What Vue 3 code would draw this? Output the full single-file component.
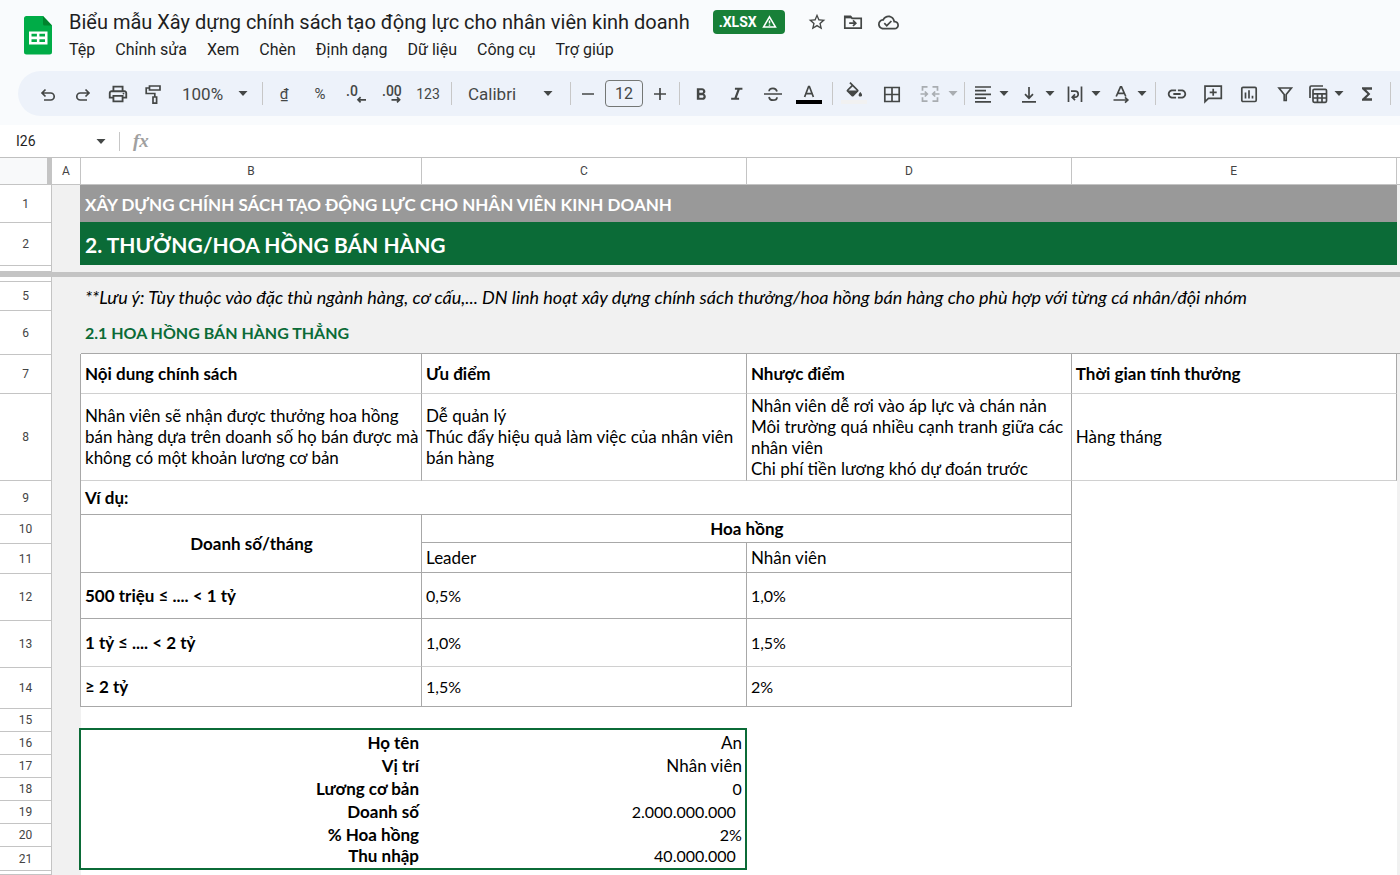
<script setup>
import { ref } from 'vue'

const menus = ['Tệp', 'Chỉnh sửa', 'Xem', 'Chèn', 'Định dạng', 'Dữ liệu', 'Công cụ', 'Trợ giúp']
const zoom = ref('100%')
const family = ref('Calibri')
const fontSize = ref('12')
const cellRef = ref('I26')

const frozenRows = [
  { n: '1', h: 38 },
  { n: '2', h: 43 },
  { n: '', h: 6 },
]
const bodyRows = [
  { n: '', h: 5 },
  { n: '5', h: 29 },
  { n: '6', h: 44 },
  { n: '7', h: 39 },
  { n: '8', h: 87 },
  { n: '9', h: 34 },
  { n: '10', h: 29 },
  { n: '11', h: 30 },
  { n: '12', h: 47 },
  { n: '13', h: 47 },
  { n: '14', h: 41 },
  { n: '15', h: 23 },
  { n: '16', h: 23 },
  { n: '17', h: 23 },
  { n: '18', h: 23 },
  { n: '19', h: 23 },
  { n: '20', h: 23 },
  { n: '21', h: 24 },
  { n: '', h: 4 },
]
const rates = [
  { label: '500 triệu ≤ .... < 1 tỷ', leader: '0,5%', staff: '1,0%', cls: 'r12' },
  { label: '1 tỷ ≤ .... < 2 tỷ', leader: '1,0%', staff: '1,5%', cls: 'r13' },
  { label: '≥ 2 tỷ', leader: '1,5%', staff: '2%', cls: 'r14' },
]
const example = [
  { label: 'Họ tên', value: 'An' },
  { label: 'Vị trí', value: 'Nhân viên' },
  { label: 'Lương cơ bản', value: '0', kind: 'digits' },
  { label: 'Doanh số', value: '2.000.000.000', kind: 'digits money' },
  { label: '% Hoa hồng', value: '2%', kind: 'digits' },
  { label: 'Thu nhập', value: '40.000.000', kind: 'digits money' },
]
const splitTools = [
  { name: 'Căn ngang', d: 'M2 3h16M2 6.7h11M2 10.4h16M2 14.1h11M2 17.8h16' },
  { name: 'Căn dọc', d: 'M10 3v11M6 10.2l4 4 4-4M3 17.8h14' },
  { name: 'Xuống dòng', d: 'M3.5 2.5v15.5M16.5 2.5v15.5M6 7.2h4.2a3 3 0 0 1 0 6H8M10 10.3L7.2 13.2l2.8 2.9' },
  { name: 'Xoay văn bản', d: 'M5.2 12.5L9.5 2.8h1l4.3 9.7M6.6 9.4h6.8M2.5 16h14M14 13.4l2.8 2.6-2.8 2.6' },
]
</script>

<template>
  <div class="app">
    <header class="top">
      <div class="brand">
        <a class="logo" href="#" aria-label="Trang tính">
          <svg width="28" height="39" viewBox="0 0 28 39">
            <path d="M2.5 0H19l9 9.5V36a2.5 2.5 0 0 1-2.500 2.500h-23A2.500 2.500 0 0 1 0 36V2.500A2.500 2.500 0 0 1 2.500 0z" fill="#00ac47" />
            <path d="M19 0l9 9.500h-7.500A1.500 1.500 0 0 1 19 8z" fill="#00832d" />
            <path d="M5 15.500h18.500V28.500H5zM7.500 17.800v2.800h5.400v-2.800zM15.400 17.800v2.800H21v-2.800zM7.500 23.200V26h5.400v-2.800zM15.400 23.200V26H21v-2.800z" fill="#fff" fill-rule="evenodd" />
          </svg>
        </a>
        <div class="heading">
          <div class="title-row">
            <h1>Biểu mẫu Xây dựng chính sách tạo động lực cho nhân viên kinh doanh</h1>
            <span class="badge">.XLSX
              <svg width="15" height="14" viewBox="0 0 15 14" fill="none" stroke="#fff" stroke-width="1.500"><path d="M7.500 1.800L13.500 12h-12z" /><path d="M7.500 5.500v3M7.500 9.500v1.300" /></svg>
            </span>
            <div class="doc-actions">
              <button aria-label="Gắn dấu sao"><svg width="20" height="20" viewBox="0 0 24 24"><path d="M22 9.240l-7.190-.62L12 2 9.190 8.630 2 9.240l5.460 4.730L5.820 21 12 17.270 18.180 21l-1.630-7.030L22 9.240zM12 15.400l-3.760 2.270 1-4.280-3.320-2.880 4.380-.38L12 6.100l1.710 4.040 4.380.38-3.320 2.880 1 4.280L12 15.400z" /></svg></button>
              <button aria-label="Di chuyển"><svg class="line" width="20" height="20" viewBox="0 0 20 20"><path d="M1.800 4.300h5.700l1.600 2h9.100v9.900H1.800z" /><path d="M2 5.500h6.500" /><path d="M6.200 11.200h6.300M10 8.400l2.800 2.800-2.800 2.800" /></svg></button>
              <button aria-label="Trạng thái lưu"><svg width="21" height="21" viewBox="0 0 24 24"><path d="M19.350 10.040C18.670 6.590 15.640 4 12 4 9.110 4 6.600 5.640 5.350 8.040 2.340 8.360 0 10.910 0 14c0 3.310 2.690 6 6 6h13c2.760 0 5-2.240 5-5 0-2.640-2.050-4.780-4.650-4.960zM19 18H6c-2.210 0-4-1.790-4-4 0-2.050 1.530-3.760 3.560-3.970l1.070-.11.500-.95C8.080 7.140 9.940 6 12 6c2.620 0 4.880 1.860 5.390 4.430l.3 1.500 1.530.11c1.560.1 2.780 1.410 2.780 2.960 0 1.650-1.350 3-3 3zm-9-3.820l-2.090-2.090L6.500 13.500 10 17l6.010-6.010-1.410-1.410z" /></svg></button>
            </div>
          </div>
          <nav class="menus">
            <button v-for="m in menus" :key="m">{{ m }}</button>
          </nav>
        </div>
      </div>

      <div class="toolbar" role="toolbar">
        <button class="tool narrow" aria-label="Hoàn tác"><svg class="line" width="20" height="20" viewBox="0 0 20 20"><path d="M7.500 5.500L4 9l3.500 3.500M4 9h8.700a3.500 3.500 0 0 1 0 7H6" /></svg></button>
        <button class="tool narrow" aria-label="Làm lại"><svg class="line" width="20" height="20" viewBox="0 0 20 20"><path d="M12.500 5.500L16 9l-3.500 3.500M16 9H7.300a3.500 3.500 0 0 0 0 7H14" /></svg></button>
        <button class="tool narrow" aria-label="In"><svg width="22" height="22" viewBox="0 0 24 24"><path d="M19 8h-1V3H6v5H5c-1.660 0-3 1.340-3 3v6h4v4h12v-4h4v-6c0-1.660-1.340-3-3-3zM8 5h8v3H8V5zm8 12v2H8v-4h8v2zm2-2v-2H6v2H4v-4c0-.55.45-1 1-1h14c.55 0 1 .45 1 1v4h-2z" /><circle cx="18" cy="11.500" r="1" /></svg></button>
        <button class="tool narrow" aria-label="Sao chép định dạng"><svg class="line" width="20" height="22" viewBox="0 0 20 22"><path d="M6.500 3h10.500v4H6.500zM6.500 5H3.200v5.500h8.600v3.500M10 14h3.600v6.200H10z" /></svg></button>
        <label class="pick zoom"><select v-model="zoom" aria-label="Thu phóng"><option>100%</option></select><svg class="caret" width="10" height="5" viewBox="0 0 10 5"><path d="M.5 0h9L5 5z" /></svg></label>
        <i class="sep"></i>
        <button class="tool txt">₫</button>
        <button class="tool txt">%</button>
        <button class="tool" aria-label="Giảm số thập phân"><svg width="20" height="20" viewBox="0 0 20 20"><text x="0" y="12" class="dec">.0</text><path class="stroke" d="M20 15.800h-8M14.600 13.200L12 15.800l2.600 2.600" /></svg></button>
        <button class="tool" aria-label="Tăng số thập phân"><svg width="20" height="20" viewBox="0 0 20 20"><text x="0" y="12" class="dec">.00</text><path class="stroke" d="M9.500 15.800h8M15 13.200l2.600 2.600-2.600 2.600" /></svg></button>
        <button class="tool txt num">123</button>
        <i class="sep"></i>
        <label class="pick family"><select v-model="family" aria-label="Phông chữ"><option>Calibri</option></select><svg class="caret" width="10" height="5" viewBox="0 0 10 5"><path d="M.5 0h9L5 5z" /></svg></label>
        <i class="sep"></i>
        <button class="tool step" aria-label="Giảm cỡ chữ"><svg class="line" width="14" height="14" viewBox="0 0 14 14"><path d="M1 7h12" /></svg></button>
        <input v-model="fontSize" class="size" aria-label="Cỡ chữ" />
        <button class="tool step" aria-label="Tăng cỡ chữ"><svg class="line" width="14" height="14" viewBox="0 0 14 14"><path d="M1 7h12M7 1v12" /></svg></button>
        <i class="sep"></i>
        <button class="tool" aria-label="In đậm"><svg width="20" height="20" viewBox="0 0 24 24"><path d="M15.600 11.790c.97-.67 1.650-1.770 1.650-2.790 0-2.260-1.750-4-4-4H7v14h7.040c2.090 0 3.710-1.700 3.710-3.790 0-1.520-.86-2.820-2.150-3.420zM10 7.500h3c.83 0 1.500.67 1.500 1.500s-.67 1.500-1.500 1.500h-3v-3zm3.500 9H10v-3h3.500c.83 0 1.500.67 1.500 1.500s-.67 1.500-1.500 1.500z" /></svg></button>
        <button class="tool" aria-label="In nghiêng"><svg width="20" height="20" viewBox="0 0 24 24"><path d="M9.500 4.500v2.500h3l-3.600 9.500H5V19h9.500v-2.500h-2.800L15.300 7h3.200V4.500z" /></svg></button>
        <button class="tool" aria-label="Gạch ngang"><svg class="line" width="20" height="20" viewBox="0 0 20 20"><path d="M1 10h18M14 7.500C13.500 5.300 12 4.300 10 4.300c-2.400 0-3.900 1.200-3.900 3M6 13c.4 2.200 2 3.200 4 3.200 2.400 0 4-1.200 4-3" /></svg></button>
        <button class="tool" aria-label="Màu văn bản"><svg width="26" height="22" viewBox="0 0 26 22"><path class="stroke" d="M8.600 14L12.600 3.500h.8L17.400 14M10 10.700h6" /><path d="M0 17h26v4H0z" fill="#000" /></svg></button>
        <i class="sep"></i>
        <button class="tool" aria-label="Màu nền"><svg width="26" height="24" viewBox="0 0 26 24"><path transform="translate(3 0) scale(.86)" d="M16.560 8.940L7.620 0 6.210 1.410l2.380 2.380-5.150 5.150c-.59.59-.59 1.540 0 2.120l5.500 5.500c.29.29.68.44 1.060.44s.77-.15 1.060-.44l5.500-5.500c.59-.58.59-1.530 0-2.120zM5.210 10L10 5.210 14.790 10H5.210zM19 11.500s-2 2.170-2 3.500c0 1.100.9 2 2 2s2-.9 2-2c0-1.330-2-3.500-2-3.500z" /><path d="M0 18h26v4H0z" fill="#f1f1f1" /></svg></button>
        <button class="tool wide" aria-label="Đường viền"><svg class="line" width="20" height="20" viewBox="0 0 20 20"><path d="M2.800 3.500h14.400v14H2.800zM10 3.500v14M2.800 10.500h14.400" /></svg></button>
        <button class="tool split muted" aria-label="Hợp nhất ô"><svg class="line" width="20" height="20" viewBox="0 0 20 20"><path d="M7.500 2.800H2.500v4M2.500 13.200v4h5M12.500 2.800h5v4M17.500 13.200v4h-5M.5 10h6.500M4.800 7.500L7.300 10l-2.500 2.500M19.500 10H13M15.200 7.500L12.700 10l2.500 2.500" /></svg><svg class="caret" width="10" height="5" viewBox="0 0 10 5"><path d="M.5 0h9L5 5z" /></svg></button>
        <i class="sep"></i>
        <button v-for="t in splitTools" :key="t.name" class="tool split" :aria-label="t.name"><svg class="line" width="20" height="20" viewBox="0 0 20 20"><path :d="t.d" /></svg><svg class="caret" width="10" height="5" viewBox="0 0 10 5"><path d="M.5 0h9L5 5z" /></svg></button>
        <i class="sep tight"></i>
        <button class="tool" aria-label="Chèn đường liên kết"><svg width="22" height="22" viewBox="0 0 24 24"><path d="M3.900 12c0-1.710 1.390-3.100 3.100-3.100h4V7H7c-2.760 0-5 2.240-5 5s2.240 5 5 5h4v-1.900H7c-1.710 0-3.100-1.390-3.100-3.100zM8 13h8v-2H8v2zm9-6h-4v1.900h4c1.710 0 3.100 1.390 3.100 3.100s-1.390 3.100-3.100 3.100h-4V17h4c2.760 0 5-2.240 5-5s-2.240-5-5-5z" /></svg></button>
        <button class="tool" aria-label="Chèn nhận xét"><svg class="line" width="20" height="20" viewBox="0 0 20 20"><path d="M2 17.800V2.200h16.300v12.200H5.400zM10.200 4.800v7M6.700 8.300h7" /></svg></button>
        <button class="tool" aria-label="Chèn biểu đồ"><svg class="line" width="20" height="20" viewBox="0 0 20 20"><rect x="2.800" y="3.300" width="14.400" height="14.200" rx="1.200" /><path d="M6.500 8.500v6M10 6.200v8.300M13.500 11.700v2.800" /></svg></button>
        <button class="tool" aria-label="Bộ lọc"><svg class="line" width="20" height="20" viewBox="0 0 20 20"><path d="M4 4h12.400l-5.200 6.500V16.500H9.200v-6z" /></svg></button>
        <button class="tool split" aria-label="Chế độ xem bảng"><svg class="line" width="20" height="20" viewBox="0 0 20 20"><path d="M2 14V3.200a1.200 1.200 0 0 1 1.200-1.200H15" /><rect x="5" y="5.300" width="13.500" height="13" rx="1.200" /><path d="M5 9.800h13.500M5 14h13.500M9.500 9.800v8.500M14 9.800v8.500" /></svg><svg class="caret" width="10" height="5" viewBox="0 0 10 5"><path d="M.5 0h9L5 5z" /></svg></button>
        <button class="tool" aria-label="Hàm"><svg width="20" height="20" viewBox="0 0 24 24"><path d="M18 4H6v2l6.500 6L6 18v2h12v-3h-7l5-5-5-5h7z" /></svg></button>
        <i class="sep"></i>
      </div>
    </header>

    <div class="formula">
      <input v-model="cellRef" class="name-box" aria-label="Hộp tên" />
      <svg class="caret" width="10" height="5" viewBox="0 0 10 5"><path d="M.5 0h9L5 5z" /></svg>
      <i class="sep"></i>
      <span class="fx">fx</span>
    </div>

    <main class="sheet">
      <section class="pane">
        <div class="gutter">
          <div class="corner"></div>
          <div v-for="(r, i) in frozenRows" :key="i" class="rownum" :style="{ height: r.h + 'px' }">{{ r.n }}</div>
        </div>
        <table>
          <colgroup><col class="ca" /><col class="cb" /><col class="cc" /><col class="cc" /><col class="cc" /><col /></colgroup>
          <thead>
            <tr><th>A</th><th>B</th><th>C</th><th>D</th><th>E</th><th></th></tr>
          </thead>
          <tbody>
            <tr class="r1"><td class="side"></td><td colspan="4" class="banner">XÂY DỰNG CHÍNH SÁCH TẠO ĐỘNG LỰC CHO NHÂN VIÊN KINH DOANH</td><td class="side"></td></tr>
            <tr class="r2"><td class="side"></td><td colspan="4" class="banner">2. THƯỞNG/HOA HỒNG BÁN HÀNG</td><td class="side"></td></tr>
            <tr class="r3"><td colspan="6" class="side"></td></tr>
          </tbody>
        </table>
      </section>
      <div class="freeze"></div>
      <section class="pane">
        <div class="gutter">
          <div v-for="(r, i) in bodyRows" :key="i" class="rownum" :style="{ height: r.h + 'px' }">{{ r.n }}</div>
        </div>
        <table>
          <colgroup><col class="ca" /><col class="cb" /><col class="cc" /><col class="cc" /><col class="cc" /><col /></colgroup>
          <tbody>
            <tr class="r4"><td colspan="6" class="side"></td></tr>
            <tr class="r5"><td class="side"></td><td colspan="4" class="side note">**Lưu ý: Tùy thuộc vào đặc thù ngành hàng, cơ cấu,... DN linh hoạt xây dựng chính sách thưởng/hoa hồng bán hàng cho phù hợp với từng cá nhân/đội nhóm</td><td class="side"></td></tr>
            <tr class="r6"><td class="side"></td><td colspan="4" class="side sub b">2.1 HOA HỒNG BÁN HÀNG THẲNG</td><td class="side b"></td></tr>
            <tr class="r7">
              <td class="side r"></td><td class="r bl strong">Nội dung chính sách</td><td class="r bl strong">Ưu điểm</td><td class="r bl strong">Nhược điểm</td><td class="r bl strong">Thời gian tính thưởng</td><td class="side"></td>
            </tr>
            <tr class="r8">
              <td class="side r"></td>
              <td class="r bl">Nhân viên sẽ nhận được thưởng hoa hồng<br />bán hàng dựa trên doanh số họ bán được mà<br />không có một khoản lương cơ bản</td>
              <td class="r bl">Dễ quản lý<br />Thúc đẩy hiệu quả làm việc của nhân viên<br />bán hàng</td>
              <td class="r bl">Nhân viên dễ rơi vào áp lực và chán nản<br />Môi trường quá nhiều cạnh tranh giữa các<br />nhân viên<br />Chi phí tiền lương khó dự đoán trước</td>
              <td class="r bl">Hàng tháng</td>
              <td class="side"></td>
            </tr>
            <tr class="r9"><td class="side r"></td><td colspan="3" class="r b strong">Ví dụ:</td><td></td><td class="side"></td></tr>
            <tr class="r10"><td class="side r"></td><td rowspan="2" class="r b strong center">Doanh số/tháng</td><td colspan="2" class="r b strong center">Hoa hồng</td><td></td><td class="side"></td></tr>
            <tr class="r11"><td class="side r"></td><td class="r b">Leader</td><td class="r b">Nhân viên</td><td></td><td class="side"></td></tr>
            <tr v-for="x in rates" :key="x.label" :class="x.cls">
              <td class="side r"></td><td class="r b strong">{{ x.label }}</td><td class="r b digits">{{ x.leader }}</td><td class="r b digits">{{ x.staff }}</td><td></td><td class="side"></td>
            </tr>
            <tr class="r15"><td class="side"></td><td colspan="4"></td><td class="side"></td></tr>
            <tr v-for="x in example" :key="x.label" class="ex">
              <td class="side"></td><td class="strong">{{ x.label }}</td><td class="val" :class="x.kind">{{ x.value }}</td><td colspan="2"></td><td class="side"></td>
            </tr>
            <tr class="r22"><td class="side"></td><td colspan="4"></td><td class="side"></td></tr>
          </tbody>
        </table>
      </section>
    </main>
  </div>
</template>

<style>
body {
  margin: 0;
  background: #fff;
  overflow: hidden;
}
</style>

<style scoped>
.app {
  font-family: Roboto, "Liberation Sans", sans-serif;
  color: #1f1f1f;
  overflow: hidden;
}
button, input, select {
  font: inherit;
  color: inherit;
  border: 0;
  background: none;
  padding: 0;
  margin: 0;
  outline: 0;
}
svg {
  fill: #444746;
  flex: none;
  display: block;
}
.line, .stroke {
  fill: none;
  stroke: #444746;
  stroke-width: 1.7px;
}
.top {
  background: #f9fbfd;
  padding-bottom: 9px;
}
.brand {
  display: flex;
  height: 71px;
}
.logo {
  margin: 16px 17px 0 24px;
}
.heading {
  flex: 1;
  min-width: 0;
}
.title-row {
  display: flex;
  align-items: center;
  height: 24px;
  margin-top: 10px;
}
h1 {
  margin: 0 23px 0 0;
  font-size: 20px;
  line-height: 24px;
  font-weight: 400;
  white-space: nowrap;
}
.badge {
  display: flex;
  align-items: center;
  gap: 5px;
  height: 24px;
  padding: 0 8px 0 6px;
  border-radius: 4px;
  background: #188038;
  color: #fff;
  font-size: 14px;
  font-weight: 700;
}
.badge svg {
  fill: none;
}
.doc-actions {
  display: flex;
  margin-left: 14px;
}
.doc-actions button {
  display: flex;
  width: 36px;
  height: 24px;
  align-items: center;
  justify-content: center;
}
.menus {
  display: flex;
  gap: 20px;
  height: 30px;
  align-items: center;
  font-size: 16px;
}
.toolbar {
  display: flex;
  align-items: center;
  height: 45px;
  margin-left: 18px;
  padding-left: 12px;
  border-radius: 23px 0 0 23px;
  background: #edf2fa;
  color: #444746;
  overflow: hidden;
}
.tool {
  flex: none;
  box-sizing: border-box;
  display: flex;
  align-items: center;
  justify-content: center;
  width: 36px;
  height: 32px;
}
.narrow {
  width: 35px;
}
.step {
  width: 28px;
}
.wide {
  width: 40px;
}
.split {
  width: 46px;
  gap: 6px;
}
.muted {
  width: 47px;
  gap: 8px;
  padding-left: 6px;
  opacity: 0.4;
}
.txt {
  font-size: 15px;
}
.num {
  font-size: 14px;
}
.dec {
  font-size: 14px;
  font-weight: 500;
}
.sep {
  flex: none;
  width: 1px;
  height: 23px;
  margin: 0 3px 0 5px;
  background: #c7c7c7;
}
.tight {
  margin: 0 3px;
}
.pick {
  flex: none;
  display: flex;
  align-items: center;
  font-size: 17px;
}
.pick select {
  appearance: none;
  flex: 1;
  min-width: 0;
}
.zoom {
  width: 66px;
  padding: 0 9px 0 12px;
}
.family {
  width: 85px;
  padding: 0 12px 0 13px;
}
.size {
  flex: none;
  box-sizing: border-box;
  width: 38px;
  height: 27px;
  margin: 0 3px;
  border: 1px solid #747775;
  border-radius: 4px;
  text-align: center;
  font-size: 16px;
}
.formula {
  display: flex;
  align-items: center;
  height: 32px;
  background: #fff;
}
.name-box {
  width: 80px;
  padding-left: 16px;
  font-size: 14px;
}
.formula .sep {
  height: 19px;
  margin: 0 13px;
}
.fx {
  font-family: "Liberation Serif", serif;
  font-style: italic;
  font-weight: 700;
  font-size: 19px;
  color: #a0a0a0;
}
.pane {
  display: flex;
  align-items: flex-start;
}
.sheet {
  border-top: 1px solid #c0c0c0;
}
.gutter {
  flex: none;
  width: 52px;
}
.corner {
  box-sizing: border-box;
  height: 27px;
  border-right: 5px solid #c4c4c4;
  border-bottom: 1px solid #c4c4c4;
  background: #f8f9fa;
}
.rownum {
  box-sizing: border-box;
  display: flex;
  align-items: center;
  justify-content: center;
  border-right: 1px solid #c4c4c4;
  border-bottom: 1px solid #c4c4c4;
  font-size: 12px;
  color: #444;
}
.freeze {
  height: 5px;
  background: #c4c4c4;
}
table {
  flex: 1;
  min-width: 0;
  width: 100%;
  table-layout: fixed;
  border-collapse: separate;
  border-spacing: 0;
  font-family: Lato, "Noto Sans", sans-serif;
  font-size: 17px;
  line-height: 21px;
  color: #000;
}
.ca {
  width: 29px;
}
.cb {
  width: 25.3%;
}
.cc {
  width: 24.1%;
}
th {
  box-sizing: border-box;
  height: 27px;
  padding: 0;
  border-right: 1px solid #c4c4c4;
  border-bottom: 1px solid #c4c4c4;
  font-family: Roboto, sans-serif;
  font-size: 12px;
  font-weight: 400;
  color: #444;
}
th:last-child {
  border-right: 0;
}
td {
  box-sizing: border-box;
  padding: 0 3px 1px 4px;
  white-space: nowrap;
}
.side {
  background: #f1f1f1;
}
td.side:first-child, td.side:last-child {
  padding: 0;
}
.r {
  border-right: 1px solid #a8a8a8;
}
.b {
  border-bottom: 1px solid #a8a8a8;
}
.bl, .r13 .b {
  border-bottom: 1px solid #d0d0d0;
}
.strong {
  font-weight: 700;
}
.digits, .sub {
  font-size: 16px;
}
.center {
  text-align: center;
}
.banner {
  padding-top: 3px;
  color: #fff;
  font-weight: 700;
}
.r1 td { height: 37px; }
.r2 td { height: 43px; }
.r1 .banner { background: #999; }
.r2 .banner { background: #0b6b37; font-size: 21px; }
.r1 .side:first-child { border-right: 1px solid #999; }
.r2 .side:first-child { border-right: 1px solid #0b6b37; }
.r3 td { height: 7px; }
.r4 td { height: 4px; }
.r5 td { height: 30px; }
.r6 td { height: 43px; }
.r7 td { height: 40px; }
.r8 td { height: 87px; }
.r9 td { height: 34px; }
.r10 td { height: 28px; }
.r11 td { height: 30px; }
.r12 td { height: 46px; }
.r13 td { height: 48px; }
.r14 td { height: 40px; }
.r15 td { height: 21px; }
.r22 td { height: 5px; }
.note {
  font-style: italic;
  font-size: 18px;
  padding-top: 3px;
}
.sub {
  padding-top: 2px;
  color: #0b6b37;
  font-weight: 700;
}
.ex td {
  height: 23px;
  padding-bottom: 3px;
  line-height: 18px;
  text-align: right;
  vertical-align: bottom;
}
.ex td:first-child, .ex .val {
  border-right: 2px solid #0b6b37;
}
.ex .val.money {
  padding-right: 9px;
}
.ex:nth-child(13) td {
  height: 27px;
}
.ex:nth-child(13) .strong, .ex:nth-child(13) .val {
  border-top: 2px solid #0b6b37;
}
.ex:nth-child(18) .strong, .ex:nth-child(18) .val {
  border-bottom: 2px solid #0b6b37;
}
</style>
